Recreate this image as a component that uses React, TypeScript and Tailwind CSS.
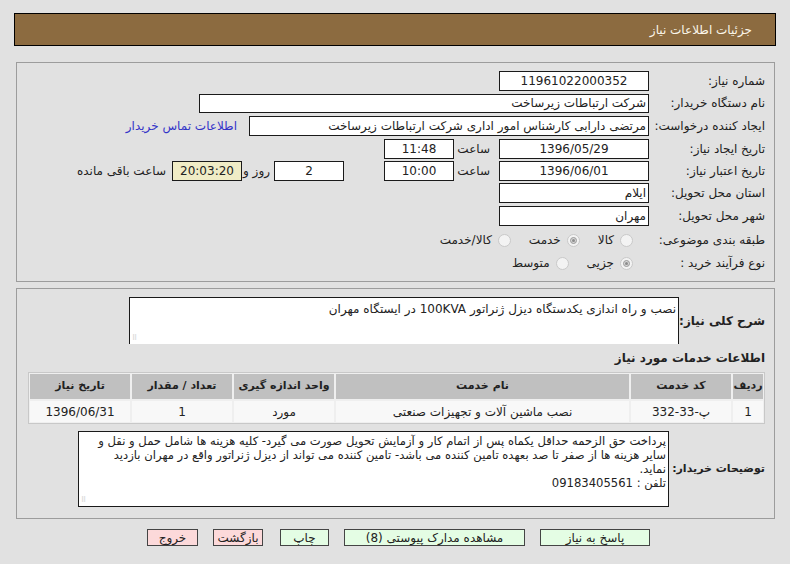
import React from "react";

const F = "font-['Tahoma','DejaVu_Sans',sans-serif]";

function Radio({ checked }: { checked?: boolean }) {
  return (
    <span className="relative inline-flex w-[13px] h-[13px] shrink-0 items-center justify-center rounded-full border border-[#c9c9c9] bg-[#f3f3f3]">
      {checked && (
        <span className="w-[7px] h-[7px] rounded-full border border-[#9a9a9a] bg-[#d6d6d6] flex items-center justify-center">
          <span className="w-[3px] h-[3px] rounded-full bg-[#8c8c8c]" />
        </span>
      )}
    </span>
  );
}

function Label({ children, w = "w-[116px]" }: { children: React.ReactNode; w?: string }) {
  return <div className={`${w} shrink-0 text-right text-[12px] text-[#222] whitespace-nowrap`}>{children}</div>;
}

function Box({
  children,
  w,
  center,
  bg = "bg-white",
  h = "h-[20px]",
}: {
  children?: React.ReactNode;
  w: string;
  center?: boolean;
  bg?: string;
  h?: string;
}) {
  return (
    <div
      className={`${w} ${h} ${bg} shrink-0 border border-[#1a1a1a] flex items-center ${
        center ? "justify-center" : "justify-start pr-[2px]"
      } text-[12px] text-[#222] whitespace-nowrap overflow-hidden`}
    >
      {children}
    </div>
  );
}

export default function App() {
  return (
    <div dir="rtl" className={`${F} w-[790px] h-[564px] bg-[#e1e1e1] overflow-hidden pt-[13px]`}>
      {/* Header */}
      <div className="mx-[14px] h-[33px] bg-[#8c6b40] border border-black flex items-center pr-[23px]">
        <span className="text-[12px] text-[#fbf6ea]">جزئیات اطلاعات نیاز</span>
      </div>

      {/* Panel 1 */}
      <div className="ml-[16px] mr-[15px] mt-[16px] h-[220px] border border-[#9c9c9c] pr-[9px] pt-[6px]">
        <div className="flex h-[23px] items-center">
          <Label>شماره نیاز:</Label>
          <Box w="w-[150px]" center>
            11961022000352
          </Box>
        </div>
        <div className="flex h-[22px] items-center">
          <Label>نام دستگاه خریدار:</Label>
          <Box w="w-[450px]" h="h-[19px]">
            شرکت ارتباطات زیرساخت
          </Box>
        </div>
        <div className="flex h-[23px] items-center">
          <Label>ایجاد کننده درخواست:</Label>
          <Box w="w-[400px]">مرتضی دارابی کارشناس امور اداری شرکت ارتباطات زیرساخت</Box>
          <span className="mr-[12px] text-[12px] text-[#3434c8]">اطلاعات تماس خریدار</span>
        </div>
        <div className="flex h-[23px] items-center">
          <Label>تاریخ ایجاد نیاز:</Label>
          <Box w="w-[150px]" center>
            1396/05/29
          </Box>
          <span className="w-[45px] shrink-0 pr-[9px] text-[12px] text-[#222]">ساعت</span>
          <Box w="w-[70px]" center>
            11:48
          </Box>
        </div>
        <div className="flex h-[22px] items-center">
          <Label>تاریخ اعتبار نیاز:</Label>
          <Box w="w-[150px]" center>
            1396/06/01
          </Box>
          <span className="w-[45px] shrink-0 pr-[9px] text-[12px] text-[#222]">ساعت</span>
          <Box w="w-[70px]" center>
            10:00
          </Box>
          <div className="w-[40px] shrink-0" />
          <Box w="w-[70px]" center>
            2
          </Box>
          <span className="w-[32px] shrink-0 pr-[4px] text-[12px] text-[#222]">روز و</span>
          <Box w="w-[70px]" center bg="bg-[#f0ecc6]">
            20:03:20
          </Box>
          <span className="mr-[6px] text-[12px] text-[#222]">ساعت باقی مانده</span>
        </div>
        <div className="flex h-[22px] items-center">
          <Label>استان محل تحویل:</Label>
          <Box w="w-[150px]">ایلام</Box>
        </div>
        <div className="flex h-[23px] items-center">
          <Label>شهر محل تحویل:</Label>
          <Box w="w-[150px]">مهران</Box>
        </div>
        <div className="flex h-[26px] items-center">
          <Label>طبقه بندی موضوعی:</Label>
          <div className="flex items-center pr-[16px] text-[12px] text-[#222]">
            <Radio />
            <span className="mr-[6px]">کالا</span>
            <span className="mr-[18px]" />
            <Radio checked />
            <span className="mr-[6px]">خدمت</span>
            <span className="mr-[18px]" />
            <Radio />
            <span className="mr-[6px]">کالا/خدمت</span>
          </div>
        </div>
        <div className="flex h-[20px] items-center">
          <Label>نوع فرآیند خرید :</Label>
          <div className="flex items-center pr-[16px] text-[12px] text-[#222]">
            <Radio checked />
            <span className="mr-[6px]">جزیی</span>
            <span className="mr-[18px]" />
            <Radio />
            <span className="mr-[6px]">متوسط</span>
          </div>
        </div>
      </div>

      {/* Panel 2 */}
      <div className="ml-[16px] mr-[15px] mt-[6px] h-[231px] border border-[#9c9c9c] pr-[9px] pt-[8px]">
        <div className="flex items-center">
          <div className="w-[86px] shrink-0 text-right text-[12px] font-bold text-[#222] whitespace-nowrap">شرح کلی نیاز:</div>
          <div className="relative w-[550px] h-[47px] bg-white border-t border-x border-[#1a1a1a] pr-[2px] pt-[2px] text-[12px] text-[#222] whitespace-nowrap overflow-hidden">
            نصب و راه اندازی یکدستگاه دیزل ژنراتور 100KVA در ایستگاه مهران
            <span className="absolute left-[2px] bottom-[2px] text-[7px] text-[#bbb] leading-none">⠿</span>
          </div>
        </div>
        <div className="mt-[5px] h-[17px] flex items-center text-[12px] font-bold text-[#222] whitespace-nowrap">
          اطلاعات خدمات مورد نیاز
        </div>
        <div className="mt-[6px] w-[737px] border border-[#c8c8c8] bg-[#efefef] p-[1px]">
          <div className="grid grid-cols-[30px_100px_293px_100px_100px_100px] gap-[2px] text-[11px] text-[#222]">
            <div className="h-[25px] bg-[#c0c0c0] flex items-center justify-center font-bold">ردیف</div>
            <div className="h-[25px] bg-[#c0c0c0] flex items-center justify-center font-bold">کد خدمت</div>
            <div className="h-[25px] bg-[#c0c0c0] flex items-center justify-center font-bold">نام خدمت</div>
            <div className="h-[25px] bg-[#c0c0c0] flex items-center justify-center font-bold">واحد اندازه گیری</div>
            <div className="h-[25px] bg-[#c0c0c0] flex items-center justify-center font-bold">تعداد / مقدار</div>
            <div className="h-[25px] bg-[#c0c0c0] flex items-center justify-center font-bold">تاریخ نیاز</div>
            <div className="h-[21px] bg-[#f8f8f8] flex items-center justify-center text-[12px]">1</div>
            <div className="h-[21px] bg-[#f8f8f8] flex items-center justify-center text-[12px]">پ-33-332</div>
            <div className="h-[21px] bg-[#f8f8f8] flex items-center justify-center text-[12px]">نصب ماشین آلات و تجهیزات صنعتی</div>
            <div className="h-[21px] bg-[#f8f8f8] flex items-center justify-center text-[12px]">مورد</div>
            <div className="h-[21px] bg-[#f8f8f8] flex items-center justify-center text-[12px]">1</div>
            <div className="h-[21px] bg-[#f8f8f8] flex items-center justify-center text-[12px]">1396/06/31</div>
          </div>
        </div>
        <div className="mt-[7px] flex items-center">
          <div className="w-[96px] shrink-0 text-right text-[11px] font-bold text-[#222] whitespace-nowrap">توضیحات خریدار:</div>
          <div className="relative w-[591px] h-[76px] bg-white border border-[#1a1a1a] pr-[2px] pt-[2px] text-[11.6px] leading-[14px] text-[#222] whitespace-nowrap overflow-hidden">
            <div>پرداخت حق الزحمه حداقل یکماه پس از اتمام کار و آزمایش تحویل صورت می گیرد- کلیه هزینه ها شامل حمل و نقل و</div>
            <div>سایر هزینه ها از صفر تا صد بعهده تامین کننده می باشد- تامین کننده می تواند از دیزل ژنراتور واقع در مهران بازدید</div>
            <div>نماید.</div>
            <div>تلفن : 09183405561</div>
            <span className="absolute left-[2px] bottom-[2px] text-[7px] text-[#bbb] leading-none">⠿</span>
          </div>
        </div>
      </div>

      {/* Buttons */}
      <div className="mt-[10px] flex items-center pr-[140px] text-[12px] text-[#222]">
        <div className="w-[110px] h-[17px] bg-[#e4fde4] border border-[#444] flex items-center justify-center">پاسخ به نیاز</div>
        <div className="mr-[15px] w-[181px] h-[17px] bg-[#e4fde4] border border-[#444] flex items-center justify-center">
          مشاهده مدارک پیوستی (8)
        </div>
        <div className="mr-[15px] w-[49px] h-[17px] bg-[#e4fde4] border border-[#444] flex items-center justify-center">چاپ</div>
        <div className="mr-[17px] w-[50px] h-[17px] bg-[#fcd9da] border border-[#444] flex items-center justify-center">بازگشت</div>
        <div className="mr-[15px] w-[51px] h-[17px] bg-[#fcd9da] border border-[#444] flex items-center justify-center">خروج</div>
      </div>
    </div>
  );
}
